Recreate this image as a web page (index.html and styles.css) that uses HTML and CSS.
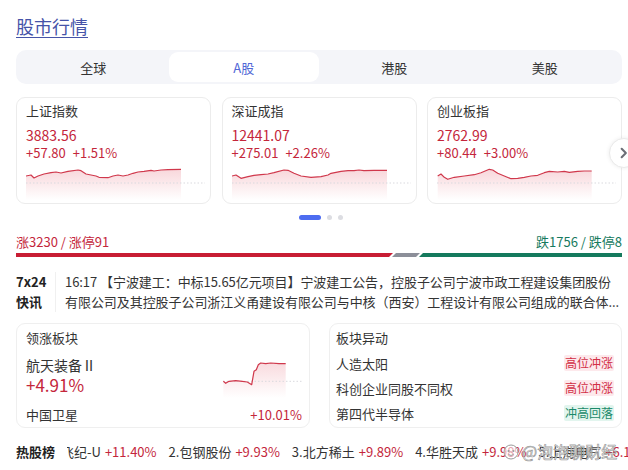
FILE: index.html
```html
<!DOCTYPE html>
<html lang="zh-CN">
<head>
<meta charset="utf-8">
<title>股市行情</title>
<link rel="stylesheet" href="styles.css">
</head>
<body>
<div class="page">
  <h1 class="title"><a href="#">股市行情</a></h1>

  <div class="tabs">
    <div class="tab">全球</div>
    <div class="tab active">A股</div>
    <div class="tab">港股</div>
    <div class="tab">美股</div>
  </div>

  <div class="cards-wrap">
    <div class="cards">
      <div class="card">
        <div class="card-name">上证指数</div>
        <div class="card-value">3883.56</div>
        <div class="card-change"><span>+57.80</span><span>+1.51%</span></div>
        <svg class="spark" viewBox="0 0 179 36">
          <defs>
            <linearGradient id="g1" x1="0" y1="0" x2="0" y2="1">
              <stop offset="0" stop-color="#e04a5c" stop-opacity="0.22"/>
              <stop offset="1" stop-color="#e04a5c" stop-opacity="0"/>
            </linearGradient>
          </defs>
          <path d="M0 12 L5 11 L8 14 L12 12 L18 10 L25 8.7 L30 8 L35 9 L42 7.3 L52 6 L55 6.7 L60 10 L65 11 L70 12 L73 13.3 L82 13.7 L87 12 L92 11 L97 12 L102 11 L107 9.3 L112 8 L118 7.3 L125 6.3 L128 7 L135 6 L142 5.7 L155 5.3 L155 36 L0 36 Z" fill="url(#g1)"/>
          <line x1="0" y1="19" x2="179" y2="19" class="base"/>
          <path d="M0 12 L5 11 L8 14 L12 12 L18 10 L25 8.7 L30 8 L35 9 L42 7.3 L52 6 L55 6.7 L60 10 L65 11 L70 12 L73 13.3 L82 13.7 L87 12 L92 11 L97 12 L102 11 L107 9.3 L112 8 L118 7.3 L125 6.3 L128 7 L135 6 L142 5.7 L155 5.3" class="line"/>
        </svg>
      </div>
      <div class="card">
        <div class="card-name">深证成指</div>
        <div class="card-value">12441.07</div>
        <div class="card-change"><span>+275.01</span><span>+2.26%</span></div>
        <svg class="spark" viewBox="0 0 179 36">
          <path d="M0 12 L4 11 L9 14.3 L16 12.7 L22 11.3 L29 10.7 L36 10 L42 8.7 L52 6 L56 6.3 L62 9.3 L69 12 L79 13.3 L89 12.7 L96 11 L99 9.3 L109 7.3 L116 6.7 L122 6.7 L127 6 L132 6.7 L142 6.3 L155 6.3 L155 36 L0 36 Z" fill="url(#g1)"/>
          <line x1="0" y1="19" x2="179" y2="19" class="base"/>
          <path d="M0 12 L4 11 L9 14.3 L16 12.7 L22 11.3 L29 10.7 L36 10 L42 8.7 L52 6 L56 6.3 L62 9.3 L69 12 L79 13.3 L89 12.7 L96 11 L99 9.3 L109 7.3 L116 6.7 L122 6.7 L127 6 L132 6.7 L142 6.3 L155 6.3" class="line"/>
        </svg>
      </div>
      <div class="card">
        <div class="card-name">创业板指</div>
        <div class="card-value">2762.99</div>
        <div class="card-change"><span>+80.44</span><span>+3.00%</span></div>
        <svg class="spark" viewBox="0 0 179 36">
          <path d="M0.7 12 L4 10 L7.3 13.3 L10.7 15.3 L17.3 13.3 L27.3 12 L37.3 10.7 L44 8.7 L52.3 5.3 L55.7 6 L60.7 9.3 L67.3 12 L74 14.7 L80.7 14.3 L87.3 13.3 L94 12 L100.7 11.3 L107.3 8.7 L112.3 7.3 L120.7 8 L127.3 7.3 L132.3 8.3 L140.7 7.3 L147.3 7 L154.7 7 L154.7 36 L0.7 36 Z" fill="url(#g1)"/>
          <line x1="0" y1="19" x2="179" y2="19" class="base"/>
          <path d="M0.7 12 L4 10 L7.3 13.3 L10.7 15.3 L17.3 13.3 L27.3 12 L37.3 10.7 L44 8.7 L52.3 5.3 L55.7 6 L60.7 9.3 L67.3 12 L74 14.7 L80.7 14.3 L87.3 13.3 L94 12 L100.7 11.3 L107.3 8.7 L112.3 7.3 L120.7 8 L127.3 7.3 L132.3 8.3 L140.7 7.3 L147.3 7 L154.7 7" class="line"/>
        </svg>
      </div>
    </div>
    <div class="next">
      <svg viewBox="0 0 30 30" width="30" height="30"><path d="M12.5 10.5 L17 15 L12.5 19.5" fill="none" stroke="#6b6e76" stroke-width="2.2" stroke-linecap="round" stroke-linejoin="round"/></svg>
    </div>
  </div>

  <div class="dots">
    <span class="dot on"></span><span class="dot"></span><span class="dot"></span>
  </div>

  <div class="breadth">
    <div class="breadth-text">
      <span class="up">涨3230 / 涨停91</span>
      <span class="down">跌1756 / 跌停8</span>
    </div>
    <div class="bar">
      <span class="seg seg-up"></span>
      <span class="seg seg-flat"></span>
      <span class="seg seg-down"></span>
    </div>
  </div>

  <div class="news">
    <div class="news-label">7x24<br>快讯</div>
    <div class="news-text">16:17 【宁波建工：中标15.65亿元项目】宁波建工公告，控股子公司宁波市政工程建设集团股份有限公司及其控股子公司浙江义甬建设有限公司与中核（西安）工程设计有限公司组成的联合体...</div>
  </div>

  <div class="panels">
    <div class="panel">
      <div class="panel-title">领涨板块</div>
      <div class="lead-body">
        <div class="lead-info">
          <div class="lead-name">航天装备Ⅱ</div>
          <div class="lead-pct">+4.91%</div>
        </div>
        <svg class="mini" viewBox="0 0 79 48">
          <defs>
            <linearGradient id="g2" x1="0" y1="0" x2="0" y2="1">
              <stop offset="0" stop-color="#e04a5c" stop-opacity="0.2"/>
              <stop offset="1" stop-color="#e04a5c" stop-opacity="0"/>
            </linearGradient>
          </defs>
          <path d="M0.3 31.3 L2.7 33.3 L6 31.3 L12.7 30.7 L19.3 31.3 L24.3 32 L28.7 34.7 L31 21.3 L33.3 19.7 L35.3 14.7 L37.7 13 L42.7 13.7 L47.7 13 L56 13.7 L62.7 13.7 L62.7 48 L0.3 48 Z" fill="url(#g2)"/>
          <line x1="0" y1="31.3" x2="79" y2="31.3" class="base"/>
          <path d="M0.3 31.3 L2.7 33.3 L6 31.3 L12.7 30.7 L19.3 31.3 L24.3 32 L28.7 34.7 L31 21.3 L33.3 19.7 L35.3 14.7 L37.7 13 L42.7 13.7 L47.7 13 L56 13.7 L62.7 13.7" class="line"/>
        </svg>
      </div>
      <div class="lead-foot">
        <span>中国卫星</span>
        <span class="red">+10.01%</span>
      </div>
    </div>
    <div class="panel panel-right">
      <div class="panel-title">板块异动</div>
      <div class="move-row"><span>人造太阳</span><span class="tag tag-up">高位冲涨</span></div>
      <div class="move-row"><span>科创企业同股不同权</span><span class="tag tag-up">高位冲涨</span></div>
      <div class="move-row"><span>第四代半导体</span><span class="tag tag-down">冲高回落</span></div>
    </div>
  </div>

  <div class="hot">
    <div class="hot-label">热股榜</div>
    <div class="marquee">
      <div class="marquee-inner">
        <span class="item">飞纪-U<span class="pct">+11.40%</span></span>
        <span class="item">2.包钢股份<span class="pct">+9.93%</span></span>
        <span class="item">3.北方稀土<span class="pct">+9.89%</span></span>
        <span class="item">4.华胜天成<span class="pct">+9.98%</span></span>
        <span class="item">5.上海电气<span class="pct">+6.12%</span></span>
      </div>
    </div>
  </div>

  <div class="watermark">
    <svg class="wm-icon" viewBox="0 0 18 18" width="18" height="18"><circle cx="9" cy="10" r="7" fill="rgba(255,255,255,0.6)" stroke="#9a9a9a" stroke-width="1"/><circle cx="6.5" cy="9" r="1" fill="#9a9a9a"/><circle cx="11.5" cy="9" r="1" fill="#9a9a9a"/><path d="M6.5 12.5 Q9 14.5 11.5 12.5" fill="none" stroke="#9a9a9a" stroke-width="1"/></svg>
    <span class="wm-text">@泡泡聊财经</span>
  </div>
</div>
</body>
</html>
```

FILE: styles.css
```css
* {
  box-sizing: border-box;
  margin: 0;
  padding: 0;
}

body {
  margin: 0;
  background: #fff;
  font-family: "Noto Sans CJK SC", "Noto Sans", sans-serif;
  color: #333;
  font-size: 13px;
}

.page {
  position: relative;
  width: 628px;
  height: 470px;
  overflow: hidden;
  padding-left: 16px;
}

.title {
  margin-top: 12px;
  font-size: 18px;
  line-height: 28px;
  font-weight: 400;
}

.title a {
  color: #4553a8;
  text-decoration: underline;
  text-underline-offset: 3px;
  text-decoration-thickness: 1px;
}

.tabs {
  margin-top: 10px;
  width: 606px;
  height: 34px;
  background: #f4f5f9;
  border-radius: 10px;
  padding: 2px;
  display: grid;
  grid-template-columns: repeat(4, 1fr);
}

.tab {
  display: flex;
  align-items: center;
  justify-content: center;
  font-size: 13px;
  color: #333;
  border-radius: 9px;
}

.tab.active {
  background: #fff;
  color: #5068d6;
}

.cards-wrap {
  position: relative;
  margin-top: 13px;
  width: 606px;
}

.cards {
  display: grid;
  grid-template-columns: repeat(3, 195px);
  column-gap: 10.5px;
}

.card {
  height: 107px;
  border: 1px solid #ececec;
  border-radius: 9px;
  padding: 4px 5px 0 9px;
}

.card-name {
  line-height: 18px;
  font-size: 13px;
  color: #333;
}

.card-value {
  margin-top: 6px;
  line-height: 18px;
  font-size: 14px;
  color: #c4263b;
}

.card-change {
  line-height: 18px;
  font-size: 13px;
  color: #c4263b;
  display: flex;
  gap: 7px;
}

.spark {
  display: block;
  width: 179px;
  height: 36px;
  margin-top: 2px;
}

.line {
  fill: none;
  stroke: #d0384c;
  stroke-width: 1.2;
  stroke-linejoin: round;
}

.base {
  stroke: #d9d9de;
  stroke-width: 1;
  stroke-dasharray: 1.5 2;
}

.next {
  position: absolute;
  left: 593px;
  top: 41px;
  width: 30px;
  height: 30px;
  border-radius: 50%;
  background: #fff;
  border: 1px solid #eaeaea;
  box-shadow: 0 0 4px rgba(0, 0, 0, 0.08);
  display: flex;
  align-items: center;
  justify-content: center;
}

.next svg {
  display: block;
}

.dots {
  margin-top: 11px;
  width: 606px;
  padding-left: 4px;
  display: flex;
  justify-content: center;
  gap: 6px;
}

.dot {
  width: 5px;
  height: 5px;
  border-radius: 50%;
  background: #dcdde2;
}

.dot.on {
  width: 22px;
  border-radius: 3px;
  background: #4d6cf0;
}

.breadth {
  margin-top: 13px;
  width: 606px;
}

.breadth-text {
  display: flex;
  justify-content: space-between;
  line-height: 18px;
  font-size: 13px;
}

.up {
  color: #c4263b;
}

.down {
  color: #167a5e;
}

.bar {
  margin-top: 2px;
  height: 4px;
  display: flex;
}

.seg {
  display: block;
  height: 4px;
}

.seg-up {
  width: 377px;
  background: #c81d34;
  clip-path: polygon(0 0, 100% 0, calc(100% - 4px) 100%, 0 100%);
}

.seg-flat {
  width: 28px;
  margin-left: -1px;
  background: #8c8f99;
  clip-path: polygon(4px 0, 100% 0, calc(100% - 4px) 100%, 0 100%);
}

.seg-down {
  flex: 1;
  margin-left: -1px;
  background: #157a5d;
  clip-path: polygon(4px 0, 100% 0, 100% 100%, 0 100%);
}

.news {
  margin-top: 15px;
  display: flex;
  width: 606px;
}

.news-label {
  width: 40px;
  flex-shrink: 0;
  font-weight: 700;
  line-height: 20px;
  font-size: 13px;
  color: #222;
  border-right: 1px solid #f0f0f0;
}

.news-text {
  margin-left: 9px;
  line-height: 20px;
  font-size: 13px;
  letter-spacing: -0.06px;
  color: #333;
  display: -webkit-box;
  -webkit-line-clamp: 2;
  -webkit-box-orient: vertical;
  overflow: hidden;
}

.panels {
  margin-top: 11px;
  display: grid;
  grid-template-columns: 294px 293px;
  column-gap: 19px;
  width: 606px;
}

.panel {
  height: 105px;
  border: 1px solid #efefef;
  border-radius: 9px;
  padding: 5px 7px 0 9px;
}

.panel-title {
  line-height: 18px;
  font-size: 13px;
  color: #333;
}

.lead-body {
  margin-top: 9px;
  height: 41px;
  display: flex;
  justify-content: space-between;
}

.lead-name {
  line-height: 18px;
  font-size: 14px;
  color: #333;
}

.lead-pct {
  line-height: 22px;
  font-size: 17px;
  color: #c4263b;
}

.mini {
  display: block;
  width: 79px;
  height: 48px;
  margin-top: -6px;
}

.lead-foot {
  margin-top: 9px;
  display: flex;
  justify-content: space-between;
  line-height: 18px;
  font-size: 13px;
}

.red {
  color: #c4263b;
}

.panel-right {
  padding-left: 6px;
}

.panel-right .panel-title {
  margin-bottom: 3.5px;
}

.move-row {
  height: 25px;
  display: flex;
  align-items: center;
  justify-content: space-between;
  font-size: 13px;
  color: #333;
}

.tag {
  font-size: 12px;
  line-height: 16px;
  padding: 0 1px;
  border-radius: 2px;
}

.tag-up {
  background: #fde9ec;
  color: #d22f45;
}

.tag-down {
  background: #e2f5ee;
  color: #1a8a6a;
}

.hot {
  margin-top: 14px;
  display: flex;
  line-height: 20px;
  font-size: 13px;
  white-space: nowrap;
}

.hot-label {
  width: 40px;
  flex-shrink: 0;
  font-weight: 700;
  color: #222;
}

.marquee {
  margin-left: 11px;
  overflow: hidden;
  flex: 1;
}

.marquee-inner {
  margin-left: -6px;
  display: flex;
}

.item {
  margin-right: 12px;
  color: #333;
}

.pct {
  margin-left: 4px;
  color: #c4263b;
}

.watermark {
  position: absolute;
  left: 502px;
  top: 440px;
  display: flex;
  align-items: center;
  gap: 2px;
}

.wm-text {
  font-size: 16px;
  line-height: 22px;
  color: rgba(255, 255, 255, 0.85);
  -webkit-text-stroke: 0.7px rgba(120, 120, 120, 0.75);
}
```
